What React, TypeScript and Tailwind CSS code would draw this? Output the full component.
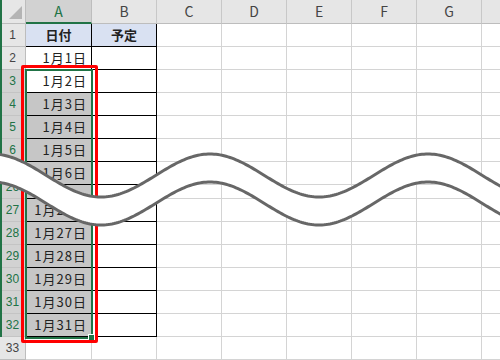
import React from "react";

type RowDef = { n: number; clip?: boolean };

const rows: RowDef[] = [
  { n: 1 }, { n: 2 }, { n: 3 }, { n: 4 }, { n: 5 }, { n: 6 }, { n: 7 },
  { n: 26, clip: true },
  { n: 27 }, { n: 28 }, { n: 29 }, { n: 30 }, { n: 31 }, { n: 32 }, { n: 33 },
];

function wave(offset: number) {
  const pts: [number, number][] = [];
  for (let x = -4; x <= 504; x += 2) {
    const y = 175.5 + offset - 21.5 * Math.cos((2 * Math.PI * (x - 210)) / 218);
    pts.push([x, y]);
  }
  return pts;
}

function Wave() {
  const top = wave(0);
  const bottom = wave(28);
  const band = [...top, ...bottom.slice().reverse()].map((p) => p.join(",")).join(" ");
  return (
    <svg className="absolute left-0 top-0 pointer-events-none" width={500} height={360} viewBox="0 0 500 360">
      <polygon points={band} fill="#ffffff" />
      <polyline points={top.map((p) => p.join(",")).join(" ")} fill="none" stroke="#676767" strokeWidth={3} />
      <polyline points={bottom.map((p) => p.join(",")).join(" ")} fill="none" stroke="#676767" strokeWidth={3} />
    </svg>
  );
}

function HeaderRow() {
  const cols = ["B", "C", "D", "E", "F", "G"];
  return (
    <div className="flex h-[24px] bg-[#e6e6e6] text-[14px] text-[#444]">
      <div className="relative w-[26px] shrink-0 border-r border-b border-[#bdbdbd]">
        <svg className="absolute right-[3px] bottom-[4px]" width="13" height="13" viewBox="0 0 13 13">
          <polygon points="13,0 13,13 0,13" fill="#b4b4b4" />
        </svg>
      </div>
      <div className="w-[66px] shrink-0 flex items-center justify-center bg-[#d2d2d2] text-[#217346] border-r border-[#bdbdbd] border-b-2 border-b-[#217346]">
        A
      </div>
      {cols.map((c) => (
        <div key={c} className="w-[65px] shrink-0 flex items-center justify-center border-r border-b border-[#c8c8c8] border-b-[#bdbdbd]">
          {c}
        </div>
      ))}
      <div className="flex-1 border-b border-[#bdbdbd]" />
    </div>
  );
}

function DataRow({ n, hideText }: { n: number; hideText?: boolean }) {
  const inTable = n <= 32;
  const selected = n >= 3 && n <= 32;
  const shaded = n >= 4 && n <= 32;
  const line = inTable ? "border-black" : "border-[#d4d4d4]";
  let aText = "";
  let bText = "";
  let head = false;
  if (n === 1) {
    aText = "日付";
    bText = "予定";
    head = true;
  } else if (inTable && !hideText) {
    aText = `1月${n - 1}日`;
  }
  return (
    <div className="flex h-[23px]">
      <div
        className={`w-[26px] shrink-0 flex items-center justify-center text-[12px] font-['Liberation_Sans',sans-serif] border-b border-r ${
          selected
            ? "bg-[#d2d2d2] text-[#217346] border-b-[#c4c4c4] border-r-[#217346]"
            : "bg-[#e6e6e6] text-[#444] border-[#bdbdbd]"
        }`}
      >
        {n}
      </div>
      <div
        className={`w-[66px] shrink-0 flex items-center border-b border-r ${line} ${
          head ? "bg-[#d9e1f2] justify-center font-bold" : "justify-end pr-[4px] tracking-[1px]"
        } ${shaded ? "bg-[#c6c6c6]" : head ? "" : "bg-white"}`}
      >
        {aText}
      </div>
      <div
        className={`w-[65px] shrink-0 flex items-center justify-center border-b border-r ${line} ${
          head ? "bg-[#d9e1f2] font-bold" : ""
        }`}
      >
        {bText}
      </div>
      {["C", "D", "E", "F", "G"].map((c) => (
        <div key={c} className="w-[65px] shrink-0 border-b border-r border-[#d4d4d4]" />
      ))}
      <div className="flex-1 border-b border-[#d4d4d4]" />
    </div>
  );
}

export default function App() {
  return (
    <div className="relative w-[500px] h-[360px] overflow-hidden bg-white font-['Noto_Sans_CJK_JP',sans-serif] text-[13px] text-[#222]">
      <HeaderRow />
      {rows.map((r) =>
        r.clip ? (
          <div key={r.n} className="h-[14px] overflow-hidden">
            <div className="-mt-[9px]">
              <DataRow n={r.n} hideText />
            </div>
          </div>
        ) : (
          <DataRow key={r.n} n={r.n} />
        )
      )}

      {/* window edge */}
      <div className="absolute left-0 top-0 w-[2px] h-[337px] bg-[#217346]" />

      {/* selection A3:A32 */}
      <div className="absolute left-[25px] top-[69px] w-[68px] h-[270px] border-2 border-[#217346]" />
      <div className="absolute left-[88px] top-[334px] w-[7px] h-[7px] bg-[#217346] border border-white" />

      {/* red callout */}
      <div className="absolute left-[21px] top-[65px] w-[77px] h-[278px] border-[3px] border-[#ff0000] rounded-[2px]" />

      <Wave />
    </div>
  );
}
